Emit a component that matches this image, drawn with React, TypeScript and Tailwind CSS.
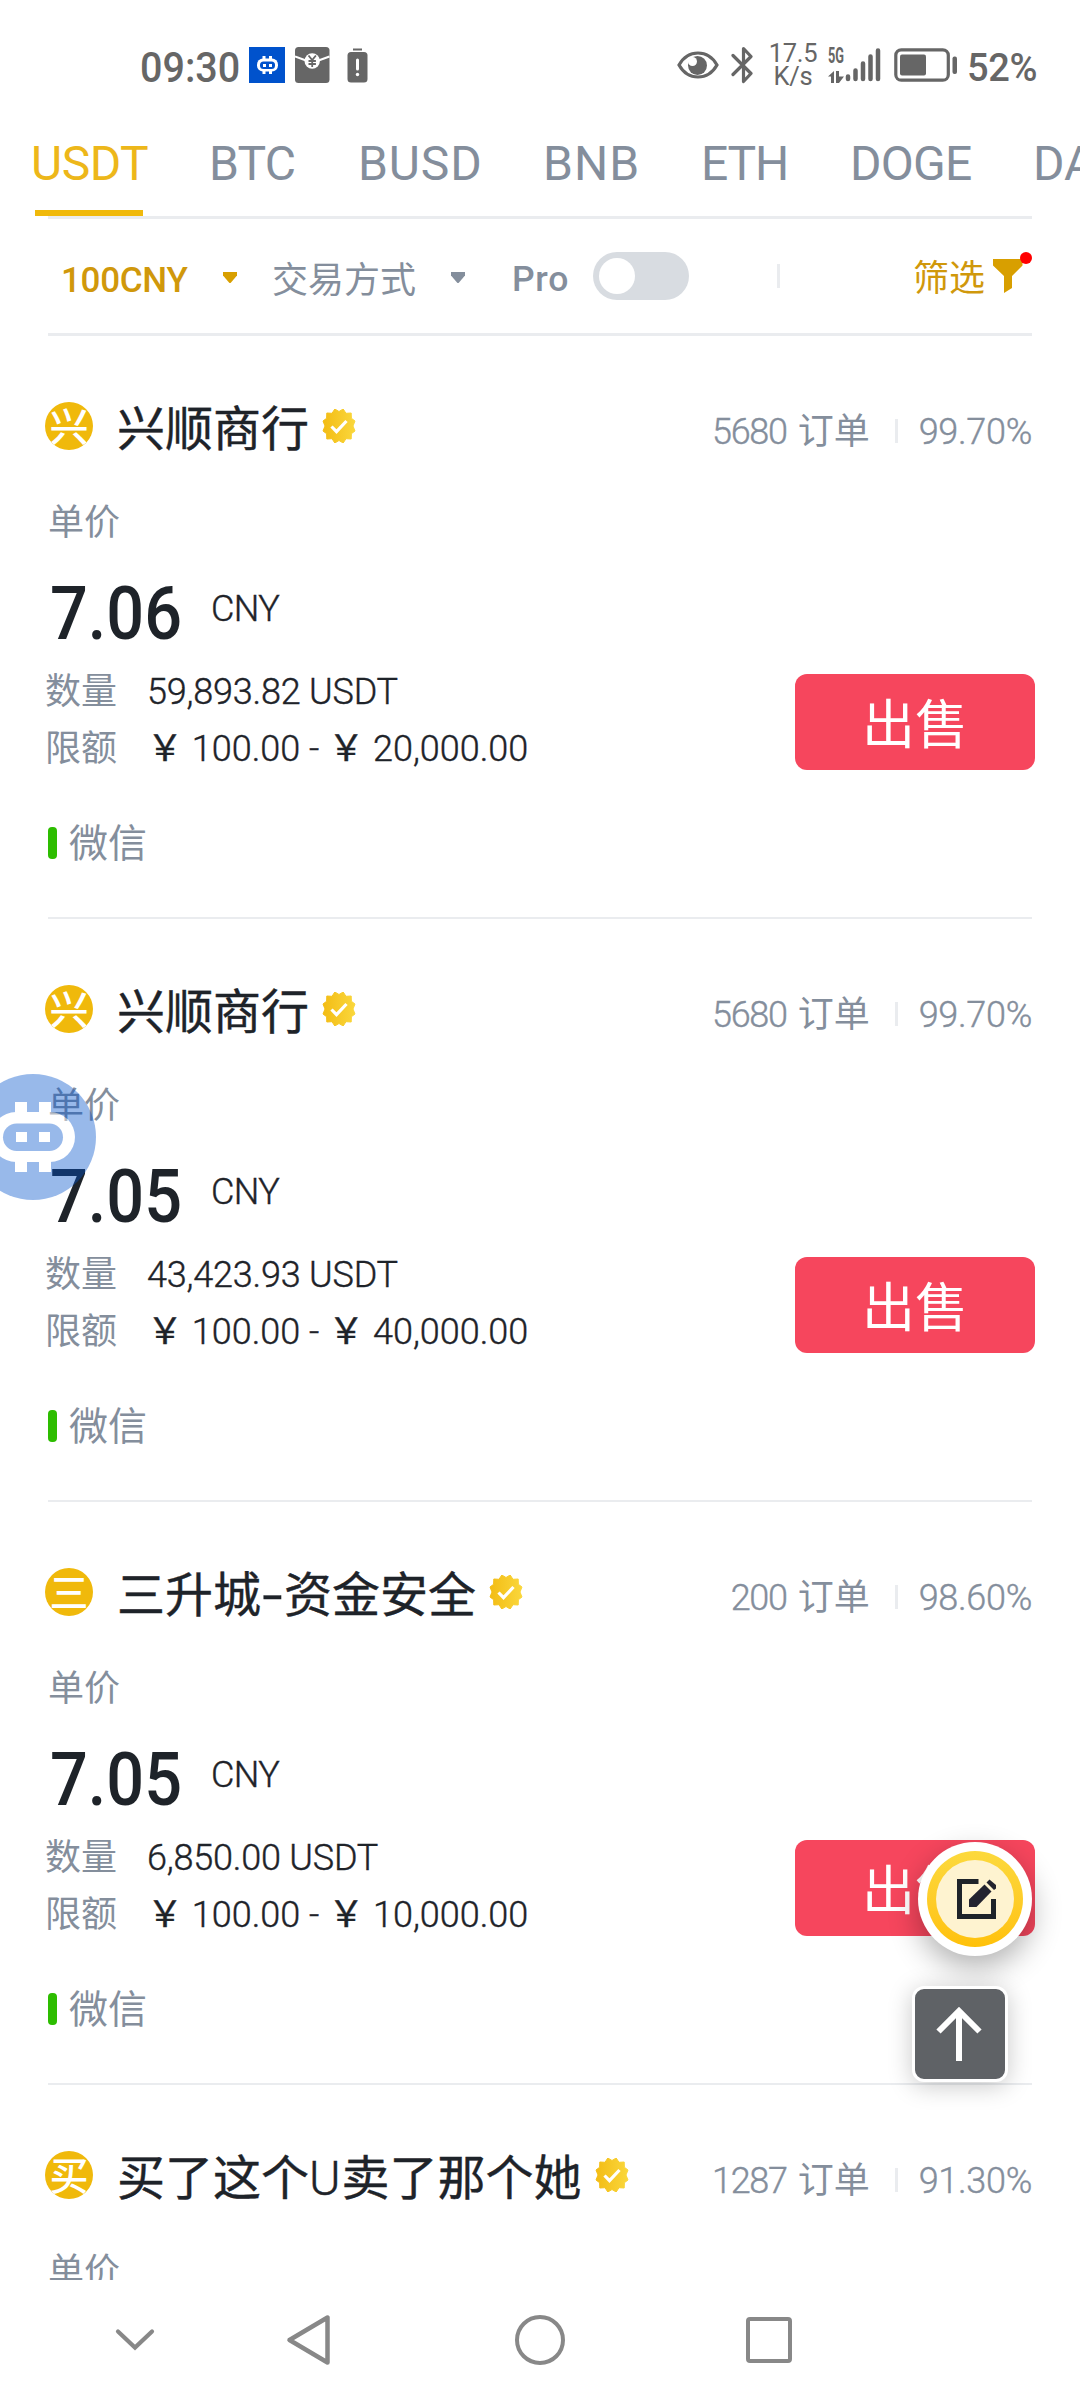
import type { ReactNode } from "react";

type Tab = { label: string; width: string; active?: boolean };

type Offer = {
  initial: string;
  name: ReactNode;
  orders: string;
  rate: string;
  detail?: { price: string; amount: string; min: string; max: string };
};

const tabs: Tab[] = [
  { label: "USDT", width: "w-[178px] tracking-[-0.5px]", active: true },
  { label: "BTC", width: "w-[149px] tracking-[-0.8px]" },
  { label: "BUSD", width: "w-[185px] tracking-[0.9px]" },
  { label: "BNB", width: "w-[158px] tracking-[1px]" },
  { label: "ETH", width: "w-[149px] tracking-[-1.2px]" },
  { label: "DOGE", width: "w-[183px] tracking-[-0.7px]" },
  { label: "DAI", width: "w-[120px]" },
];

const offers: Offer[] = [
  {
    initial: "兴",
    name: "兴顺商行",
    orders: "5680",
    rate: "99.70%",
    detail: { price: "7.06", amount: "59,893.82", min: "100.00", max: "20,000.00" },
  },
  {
    initial: "兴",
    name: "兴顺商行",
    orders: "5680",
    rate: "99.70%",
    detail: { price: "7.05", amount: "43,423.93", min: "100.00", max: "40,000.00" },
  },
  {
    initial: "三",
    name: (
      <>
        三升城
        <span className="inline-block w-[23px] scale-x-150 text-center">-</span>
        资金安全
      </>
    ),
    orders: "200",
    rate: "98.60%",
    detail: { price: "7.05", amount: "6,850.00", min: "100.00", max: "10,000.00" },
  },
  {
    initial: "买",
    name: (
      <>
        买了这个<span className="pr-[1px] font-light">U</span>卖了那个她
      </>
    ),
    orders: "1287",
    rate: "91.30%",
  },
];

// light digits with a hairline stroke, a bit heavier than plain light
const thin = "font-light [-webkit-text-stroke:0.4px_currentColor]";

const StatusBar = () => (
  <div className="flex h-[130px] items-center pl-[140px] text-[#666]">
    <span className="w-[109px] origin-left scale-x-[0.94] pt-[5px] text-[42px] leading-none font-medium">
      09:30
    </span>
    <svg width="36" height="36" viewBox="0 0 36 36">
      <path fill="#0052cc" d="M0 0h36v36H0z" />
      <g fill="#fff">
        <path d="M13.500 9h3v4h-3zM20 9h3v4h-3zM13.500 23h3v4h-3zM20 23h3v4h-3z" />
        <rect x="8" y="11.500" width="21" height="13" rx="6" />
      </g>
      <rect x="11" y="14.500" width="15" height="7.500" rx="3.500" fill="#0052cc" />
      <path fill="#fff" d="M14 17h3v3h-3zM20 17h3v3h-3z" />
    </svg>
    <svg className="ml-[10px]" width="35" height="36" viewBox="0 0 35 36">
      <rect width="34.500" height="36" rx="3.500" fill="#666" />
      <path d="M0 9.500l11 4M34.500 9.500l-11 4" stroke="#fff" strokeWidth="2" />
      <circle cx="17.200" cy="14" r="7.700" fill="#fff" />
      <path
        d="M13.500 8.500l3.700 4.500 3.700-4.500M17.200 13v7M13.500 14h7.400M13.500 17h7.400"
        stroke="#666"
        strokeWidth="1.800"
        fill="none"
      />
    </svg>
    <svg className="ml-[17px]" width="21" height="36" viewBox="0 0 21 36">
      <rect x="6" y="1.500" width="9" height="2" fill="#666" />
      <rect x="0.500" y="5" width="20" height="30.500" rx="3.500" fill="#666" />
      <path d="M10.500 13v9" stroke="#fff" strokeWidth="3" strokeLinecap="round" />
      <circle cx="10.500" cy="27.500" r="1.700" fill="#fff" />
    </svg>

    <svg className="ml-[309px]" width="42" height="30" viewBox="0 0 42 30">
      <path
        d="M2 15C11-1 31-1 40 15C31 31 11 31 2 15Z"
        fill="none"
        stroke="#666"
        strokeWidth="3.200"
      />
      <circle cx="20.500" cy="15.500" r="9.500" fill="#666" />
      <circle cx="15.500" cy="11.500" r="4.500" fill="#fff" />
    </svg>
    <svg className="ml-[12px]" width="24" height="38" viewBox="0 0 24 38">
      <path
        d="M2 9.500L20 27.500 12.500 35.500V2.500L20 10.500 2 28.500"
        fill="none"
        stroke="#666"
        strokeWidth="3.200"
        strokeLinejoin="round"
        strokeLinecap="round"
      />
    </svg>
    <div className="ml-[12px] w-[52px] text-center text-[25.500px] leading-[23px] tracking-[-0.3px]">
      <div>17.5</div>
      <div>K/s</div>
    </div>
    <div className="ml-[9px] flex h-[36px] w-[17px] flex-col justify-between">
      <span className="origin-left scale-x-[0.58] text-[22px] leading-[18px] font-bold">5G</span>
      <svg width="18" height="12" viewBox="0 0 18 12">
        <path d="M0 5.500L6 0v12H3V5.500zM8 0h3v5.500h5L11 12H8z" fill="#666" />
      </svg>
    </div>
    <svg width="36" height="36" viewBox="0 0 36 36">
      <path
        d="M3 29.500v2.500M10.500 23.500v8.500M18 16.500v15.500M25.500 9.500v22.500M33 3.500v28.500"
        stroke="#666"
        strokeWidth="4.500"
        strokeLinecap="round"
      />
    </svg>
    <svg className="ml-[13px]" width="64" height="34" viewBox="0 0 64 34">
      <rect x="1.800" y="1.800" width="52.500" height="30.400" rx="5.500" fill="none" stroke="#666" strokeWidth="3.200" />
      <rect x="6" y="6.500" width="26" height="21" rx="2" fill="#666" />
      <rect x="58.500" y="8.500" width="4.500" height="17.500" rx="2" fill="#666" />
    </svg>
    <span className="ml-[9px] pt-[5px] text-[38px] leading-none font-medium tracking-[-0.4px]">
      52%
    </span>
  </div>
);

const Caret = ({ color }: { color: string }) => (
  <svg className="mt-[3px]" width="14" height="12" viewBox="0 0 14 12">
    <path d="M0 0h14v3.500L8 10.500q-1 1-2 0L0 3.500z" fill={color} />
  </svg>
);

const FilterBar = () => (
  <div className="flex h-[114px] items-center pr-12 pl-[61px] text-[#848e9c]">
    <span className="w-[162px] pt-2 text-[35px] leading-none font-medium tracking-[-0.3px] text-[#d0980b]">
      100CNY
    </span>
    <Caret color="#d89f00" />
    <span className="ml-[35px] w-[179px] pt-[9px] text-[36px] leading-none">交易方式</span>
    <Caret color="#848e9c" />
    <span className="ml-[47px] w-[81px] pt-2 text-[35.500px] leading-none font-medium tracking-[0.7px]">
      Pro
    </span>
    <div className="flex h-12 w-24 items-center rounded-full bg-[#d8dce1] pl-[6px]">
      <div className="size-9 rounded-full bg-white" />
    </div>
    <div className="ml-[88px] h-6 w-[3px] bg-[#eaecef]" />
    <div className="relative ml-auto flex items-center pr-[9px]">
      <span className="pt-[5px] text-[36px] leading-none text-[#d0980b]">筛选</span>
      <svg className="ml-[8px]" width="30" height="34" viewBox="0 0 30 34">
        <path d="M0 0h29.500v6.500L19 17v12l-8 5V17L0 6.500z" fill="#d89f00" />
      </svg>
      <span className="absolute -top-[4px] right-0 size-3 rounded-full bg-[#ff0000]" />
    </div>
  </div>
);

const VerifiedBadge = () => (
  <svg className="mt-[7px] ml-[13px]" width="34" height="34" viewBox="0 0 34 34">
    <defs>
      <linearGradient id="badge" x1="0" x2="1">
        <stop offset="0" stopColor="#f3bc14" />
        <stop offset="1" stopColor="#fad73c" />
      </linearGradient>
    </defs>
    {/* twelve-point seal */}
    <path
      d="M17 2.500L21.200 0l2.800 4.300 5.200-.3.200 5.300L33 12l-2 5 2 5-3.600 2.700-.2 5.300-5.200-.3-2.800 4.300L17 31.500 12.800 34 10 29.700l-5.200.3-.2-5.300L1 22l2-5-2-5 3.600-2.700.2-5.300 5.200.3L12.800 0z"
      fill="url(#badge)"
      stroke="url(#badge)"
      strokeLinejoin="round"
    />
    <path d="M9.500 17.500l5 5.200L24.500 12" fill="none" stroke="#fff" strokeWidth="3.200" />
  </svg>
);

const OfferCard = ({ offer }: { offer: Offer }) => (
  <div className="mx-12 h-[583px] border-b-2 border-[#eaecef] pt-[66px] text-[#1e2329]">
    <div className="-ml-[3px] flex h-12 items-start">
      <div className="flex size-12 justify-center overflow-hidden rounded-full bg-[#f0b90b] text-[39px] leading-[53px] font-medium text-white">
        {offer.initial}
      </div>
      <div className="ml-6 text-[48px] leading-[56px] whitespace-nowrap [-webkit-text-stroke:0.4px_currentColor]">
        {offer.name}
      </div>
      <VerifiedBadge />
      <div className="ml-auto flex text-[36px] leading-[61px] text-[#848e9c]">
        <span className={`${thin} tracking-[-1.3px]`}>{offer.orders}</span>
        <span className="ml-[11px]">订单</span>
        <span className="mt-[17px] ml-[25px] h-6 w-[3px] bg-[#eaecef]" />
        <span className={`${thin} ml-[21px] tracking-[-0.3px]`}>{offer.rate}</span>
      </div>
    </div>

    <div className="mt-[55px] text-[36px] leading-[37px] text-[#848e9c]">单价</div>

    {offer.detail && (
      <>
        <div className="mt-[35px] flex justify-between">
          <div>
            <div className="flex h-[73px] pl-[2px]">
              <span className="w-[161px] origin-left scale-x-[0.9] text-[74px] leading-[73px] font-medium">
                {offer.detail.price}
              </span>
              <span className={`${thin} text-[36px] leading-[65px] tracking-[-0.6px]`}>CNY</span>
            </div>
            <div className="mt-[13px] -ml-[3px] flex text-[36px] leading-[59px]">
              <span className="h-[57px] w-[102px] text-[36px] text-[#848e9c]">数量</span>
              <span className={`${thin} tracking-[-0.2px]`}>{offer.detail.amount} USDT</span>
            </div>
            <div className="-mt-[2px] -ml-[3px] flex text-[36px] leading-[59px]">
              <span className="w-[102px] text-[36px] text-[#848e9c]">限额</span>
              <span className={thin}>
                <span className="font-normal">￥</span> {offer.detail.min} -{" "}
                <span className="font-normal">￥</span> {offer.detail.max}
              </span>
            </div>
          </div>
          <button className="mt-[97px] -mr-[3px] h-24 w-60 rounded-xl bg-[#f6465d] pt-2 text-[53px] leading-none text-white">
            出售
          </button>
        </div>

        <div className="mt-[44px] flex h-10 items-center text-[39px] leading-[45px] text-[#848e9c]">
          <span className="h-8 w-[9px] rounded bg-[#2dbd00]" />
          <span className="ml-3 pt-[3px]">微信</span>
        </div>
      </>
    )}
  </div>
);

// half-transparent assistant bubble docked to the left edge
const AssistantBubble = () => (
  <svg
    className="absolute top-[1074px] -left-[30px] opacity-40"
    width="126"
    height="126"
    viewBox="0 0 126 126"
  >
    <circle cx="63" cy="63" r="63" fill="#0052cd" />
    <path d="M45 28h12v70H45zM69 28h12v70H69z" fill="#fff" />
    <rect x="21" y="38" width="84" height="50" rx="25" fill="#fff" />
    <rect x="33" y="49.500" width="60" height="27.500" rx="13.700" fill="#0052cd" />
    <path d="M46 58h11v10H46zM69 58h11v10H69z" fill="#fff" />
  </svg>
);

const FloatingActions = () => (
  <>
    <div className="absolute top-[1842px] left-[918px] flex size-[114px] items-center justify-center rounded-full bg-white shadow-[0_12px_30px_rgba(0,0,0,0.3)]">
      <div className="flex size-24 items-center justify-center rounded-full bg-linear-to-b from-[#fcd93c] to-[#ffc107]">
        <div className="flex size-[78px] items-center justify-center rounded-full bg-[#fef3d0]">
          <svg className="ml-[3px]" width="39" height="40" viewBox="0 0 39 40">
            <path d="M21.500 2.500H2.500v35h34V20" fill="none" stroke="#1e2329" strokeWidth="5" />
            <path d="M12 28v-7.500L27.500 5.500l7 7L19.500 28z" fill="#23232f" />
            <path d="M29.500 3.500L32.500.5l7 6V9l-2.500 2z" fill="#23232f" />
          </svg>
        </div>
      </div>
    </div>
    <div className="absolute top-[1986px] left-[912px] flex size-24 items-center justify-center rounded-xl border-[3px] border-white bg-[#5f6266] shadow-[0_4px_24px_rgba(0,0,0,0.22)]">
      <svg className="mr-[3px]" width="46" height="56" viewBox="0 0 46 56">
        <path
          d="M23 55V4M2.500 25.500L23 5l20.500 20.500"
          fill="none"
          stroke="#fff"
          strokeWidth="6"
        />
      </svg>
    </div>
  </>
);

const NavBar = () => (
  <div className="relative flex h-[120px] items-center bg-white pl-[114px]">
    <svg width="42" height="26" viewBox="0 0 42 26">
      <path d="M4 4.500l17 16 17-16" fill="none" stroke="#888" strokeWidth="4.200" strokeLinecap="round" />
    </svg>
    <svg className="ml-[129px]" width="46" height="52" viewBox="0 0 46 52">
      <path
        d="M42.500 3.500v45L4.500 26z"
        fill="none"
        stroke="#888"
        strokeWidth="4.500"
        strokeLinejoin="round"
      />
    </svg>
    <div className="ml-[184px] size-[50px] rounded-full border-4 border-[#888]" />
    <div className="ml-[181px] size-[46px] rounded-[4px] border-4 border-[#888]" />
  </div>
);

const App = () => {
  return (
    <div className="relative h-[2400px] w-[1080px] overflow-hidden bg-white font-['Roboto','Noto_Sans_CJK_SC',sans-serif]">
      <StatusBar />
      <div className="flex h-[86px] overflow-hidden pl-[31px]">
        {tabs.map((tab) => (
          <div
            key={tab.label}
            className={`flex shrink-0 flex-col justify-between text-[48px] leading-[67px] ${tab.width} ${
              tab.active ? "text-[#edb71a]" : "text-[#848e9c]"
            }`}
          >
            {tab.label}
            {tab.active && <div className="ml-1 h-[6px] w-[108px] bg-[#f0b90b]" />}
          </div>
        ))}
      </div>
      <div className="mx-12 h-[3px] bg-[#eaecef]" />
      <FilterBar />
      <div className="mx-12 h-[3px] bg-[#eaecef]" />

      <div className="h-[1944px] overflow-hidden">
        {offers.map((offer, index) => (
          <OfferCard key={index} offer={offer} />
        ))}
      </div>
      <NavBar />

      <AssistantBubble />
      <FloatingActions />
    </div>
  );
};

export default App;
